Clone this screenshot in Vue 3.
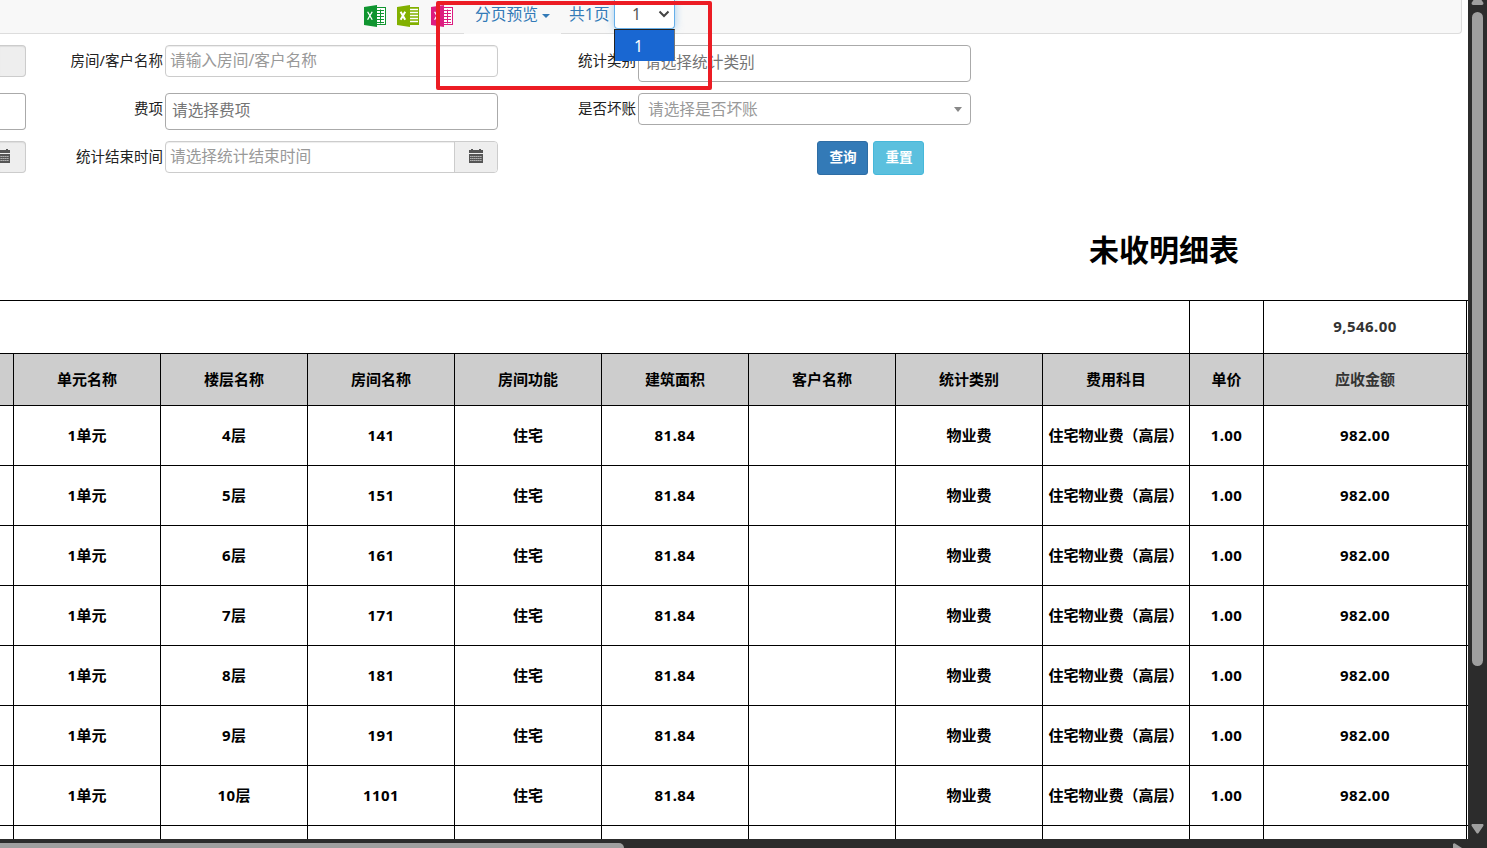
<template>
  <div class="window">
    <div class="view">
      <div class="toolbar">
        <div class="exports">
          <svg v-for="icon in exportIcons" :key="icon.color" class="export-icon" width="23" height="23" viewBox="0 0 23 23">
            <template v-if="icon.grid">
              <rect x="11.5" y="2.5" width="10" height="17" fill="#fff" :stroke="icon.color" />
              <path d="M13 5.5h7M13 8.5h7M13 11.5h7M13 14.5h7M13 17.5h7M16.5 4.5v14" :stroke="icon.color" />
            </template>
            <template v-else>
              <rect x="11" y="2" width="11" height="18" :fill="icon.color" />
              <path d="M13 4.5h8M13 7.5h8M13 10.5h8M13 13.5h8M13 16.5h8" stroke="#fff" stroke-width="1.3" />
            </template>
            <path d="M0 2L13 0V22L0 20Z" :fill="icon.color" />
            <path d="M3.6 6.8L8.2 14.8M8.2 6.8L3.6 14.8" stroke="#fff" :stroke-width="icon.grid ? 1.3 : 2" />
          </svg>
        </div>
        <a class="nav-link">分页预览<i class="caret"></i></a>
        <span class="page-total">共1页</span>
        <div class="page-select">
          <span>1</span>
          <svg width="12" height="8" viewBox="0 0 12 8"><path d="M1.5 1.5L6 6L10.5 1.5" fill="none" stroke="#444" stroke-width="2" /></svg>
          <div class="page-options">1</div>
        </div>
      </div>

      <div class="filters">
        <div class="filter-row">
          <div class="cut input disabled"></div>
          <label>房间/客户名称</label>
          <div class="field input">请输入房间/客户名称</div>
          <label>统计类别</label>
          <div class="field multi">请选择统计类别</div>
        </div>
        <div class="filter-row">
          <div class="cut multi"></div>
          <label>费项</label>
          <div class="field multi">请选择费项</div>
          <label>是否坏账</label>
          <div class="field single">请选择是否坏账<i class="arrow"></i></div>
        </div>
        <div class="filter-row">
          <div class="cut input addon-end">
            <svg width="14" height="14" viewBox="0 0 14 14"><path :d="calendarPath" fill="#555" fill-rule="evenodd" /></svg>
          </div>
          <label>统计结束时间</label>
          <div class="field input date">
            <span>请选择统计结束时间</span>
            <div class="addon">
              <svg width="14" height="14" viewBox="0 0 14 14"><path :d="calendarPath" fill="#555" fill-rule="evenodd" /></svg>
            </div>
          </div>
          <div class="actions">
            <button class="btn btn-primary">查询</button>
            <button class="btn btn-info">重置</button>
          </div>
        </div>
      </div>

      <h1>未收明细表</h1>

      <table class="report">
        <colgroup>
          <col class="c-cut" />
          <col v-for="n in 8" :key="n" class="c-text" />
          <col class="c-price" />
          <col class="c-amount" />
          <col class="c-edge" />
        </colgroup>
        <tbody>
          <tr class="total">
            <td colspan="9"></td>
            <td></td>
            <td class="num">9,546.00</td>
            <td></td>
          </tr>
          <tr class="head">
            <td></td>
            <td v-for="h in headers" :key="h">{{ h }}</td>
            <td class="muted">应收金额</td>
            <td></td>
          </tr>
          <tr v-for="row in rows" :key="row.room">
            <td></td>
            <td><span class="num">1</span>单元</td>
            <td><span class="num">{{ row.floor }}</span>层</td>
            <td class="num">{{ row.room }}</td>
            <td>住宅</td>
            <td class="num">81.84</td>
            <td></td>
            <td>物业费</td>
            <td>住宅物业费（高层）</td>
            <td class="num">1.00</td>
            <td class="num">982.00</td>
            <td></td>
          </tr>
          <tr><td v-for="n in 12" :key="n"></td></tr>
        </tbody>
      </table>
    </div>

    <div class="vbar">
      <svg class="vbar-up" width="13" height="5" viewBox="0 0 13 5"><path d="M2.5 0H10.5L12.5 3Q12.5 5 11 5H2Q.5 5 .5 3Z" fill="#9f9f9f" /></svg>
      <div class="vbar-thumb"></div>
      <svg class="vbar-down" width="13" height="10" viewBox="0 0 13 10"><path d="M1 0H12Q13 1 12.3 2L7.5 9Q6.5 10 5.5 9L.7 2Q0 1 1 0Z" fill="#9f9f9f" /></svg>
    </div>
    <div class="hbar">
      <div class="hbar-thumb"></div>
      <svg width="10" height="5" viewBox="0 0 10 5"><path d="M0 5V1Q1 0 2 .5L9 5Z" fill="#9f9f9f" /></svg>
    </div>

    <div class="highlight"></div>
  </div>
</template>

<script setup>
const exportIcons = [
  { color: '#109530', grid: true },
  { color: '#82b000', grid: false },
  { color: '#dc1c80', grid: true }
]

const headers = ['单元名称', '楼层名称', '房间名称', '房间功能', '建筑面积', '客户名称', '统计类别', '费用科目', '单价']

const rows = [
  { floor: 4, room: '141' },
  { floor: 5, room: '151' },
  { floor: 6, room: '161' },
  { floor: 7, room: '171' },
  { floor: 8, room: '181' },
  { floor: 9, room: '191' },
  { floor: 10, room: '1101' }
]

// calendar body with a grid of small holes
const holes = [7, 9, 11].map(y => [1, 3, 5, 7, 9, 11].map(x => `M${x + 0.4} ${y}h1v1h-1z`).join('')).join('')
const calendarPath = 'M0 1h2V0h2v1h6V0h2v1h2v3H0zM0 5h14v9H0z' + holes
</script>

<style>
body { margin: 0; overflow: hidden; }
</style>

<style scoped>
* { box-sizing: border-box; }
.window {
  position: relative; width: 1487px; height: 848px; overflow: hidden; background: #fff;
  display: grid; grid-template-columns: 1468px 19px; grid-template-rows: 839px 9px;
  font-family: "Noto Sans", "Noto Sans CJK SC", sans-serif; color: #333;
}
.view { overflow: hidden; }

.toolbar {
  display: flex; width: 1462px; height: 34px; background: #f8f8f8;
  border-right: 1px solid #ddd; border-bottom: 1px solid #ddd; border-bottom-right-radius: 4px;
  font-size: 15.75px; line-height: 28px; color: #337ab7;
}
.exports { display: flex; gap: 10.4px; padding: 5px 0 0 364px; width: 464px; }
.export-icon { flex: none; }
.nav-link { display: flex; align-items: center; width: 97px; height: 34px; padding: 0 0 6px 11px; background: #f8f8f8; }
.caret { margin: 4px 0 0 4px; border: 4px solid transparent; border-top-color: #337ab7; border-bottom: 0; }
.page-total { width: 53px; padding-left: 8px; white-space: nowrap; }
.page-select {
  position: relative; display: flex; justify-content: space-between; width: 61px; height: 29px;
  padding: 0 4px 0 17px; background: #fff; border: 1px solid #66afe9; border-top: 0; border-radius: 0 0 4px 4px;
  box-shadow: 0 0 8px rgba(102, 175, 233, .6); color: #555;
}
.page-select svg { margin-top: 10px; }
.page-options {
  position: absolute; left: -1px; top: 29px; z-index: 2; width: 61px; height: 32px; padding-left: 19px;
  border: 1px solid #767676; border-bottom: 0; border-top-color: #222; border-left-color: #222; background: #1967d2; color: #fff; line-height: 33px;
}

.filters { padding-top: 11px; }
.filter-row { display: flex; align-items: flex-start; height: 48px; }
.filter-row label { width: 139px; padding-right: 2px; text-align: right; font-size: 14.5px; line-height: 30px; color: #222; }
.filter-row label + .field { flex: none; }
.filter-row .field + label { width: 140px; }
.cut { width: 26px; }
.cut.input, .cut.multi { border-left: 0; border-radius: 0 4px 4px 0; }
.field { width: 333px; font-size: 15.7px; }
.input {
  height: 32px; padding-left: 4px; line-height: 28px; border: 1px solid #ccc; border-radius: 4px;
  box-shadow: inset 0 1px 1px rgba(0, 0, 0, .075); color: #999;
}
.disabled { background: #eee; }
.addon-end { padding: 7px 0 0; background: #eee; line-height: 0; }
.addon-end svg { margin-left: -4px; }
.multi { height: 37px; padding-left: 6px; line-height: 32px; border: 1px solid #aaa; border-radius: 4px; color: #757575; }
.single {
  display: flex; justify-content: space-between; height: 32px; padding: 0 8px 0 9px;
  border: 1px solid #aaa; border-radius: 4px; color: #999; line-height: 30px;
}
.arrow { margin-top: 13px; height: 0; border: 4px solid transparent; border-top: 5px solid #888; border-bottom: 0; }
.date { display: flex; justify-content: space-between; }
.addon { display: flex; justify-content: center; width: 43px; padding-top: 7px; border-left: 1px solid #ccc; border-radius: 0 3px 3px 0; background: #eee; }
.actions { display: flex; gap: 5px; margin-left: 319px; }
.btn { width: 51px; height: 34px; padding: 0 0 4px 1px; border: 1px solid; border-radius: 3px; color: #fff; font-family: inherit; font-size: 13.6px; font-weight: 700; }
.btn-primary { background: #337ab7; border-color: #2e6da4; }
.btn-info { background: #5bc0de; border-color: #46b8da; }

h1 { margin: 39px 0 0 1064px; width: 200px; height: 72px; line-height: 44px; font-size: 30px; font-weight: 700; text-align: center; color: #000; }

.report {
  width: 1468px; table-layout: fixed; border-collapse: separate; border-spacing: 0; border-top: 1px solid #000;
  font-size: 15px; font-weight: 700; color: #000;
}
.c-cut { width: 14px; }
.c-text { width: 147px; }
.c-price { width: 74px; }
.c-amount { width: 203px; }
.c-edge { width: 1px; }
.report td { height: 60px; padding: 0 0 2px; border-right: 1px solid #000; border-bottom: 1px solid #000; text-align: center; white-space: nowrap; line-height: 20px; }
.report td:last-child { border-right: 0; }
.report .total td { height: 53px; color: #333; }
.report .head td { height: 52px; background: #cdcdcd; }
.report .head .muted { color: #333; }
.num { letter-spacing: .45px; }

.vbar { grid-row: 1 / 3; grid-column: 2; display: flex; flex-direction: column; padding-left: 4px; background: #2c2c2c; }
.vbar-thumb { width: 11px; height: 654px; margin-top: 7px; border-radius: 6px; background: #9f9f9f; }
.vbar-down { margin: 158px 0 0 -1px; }
.vbar-up { margin-left: -1px; }
.hbar { grid-row: 2; grid-column: 1; display: flex; justify-content: space-between; align-items: flex-end; padding-right: 5px; background: #2c2c2c; }
.hbar-thumb { width: 624px; height: 5px; border-top-right-radius: 5px; background: #9f9f9f; }

.highlight { position: absolute; left: 436px; top: 1px; z-index: 5; width: 276px; height: 89px; border: 4px solid #ec1c24; border-radius: 2px; }
</style>
